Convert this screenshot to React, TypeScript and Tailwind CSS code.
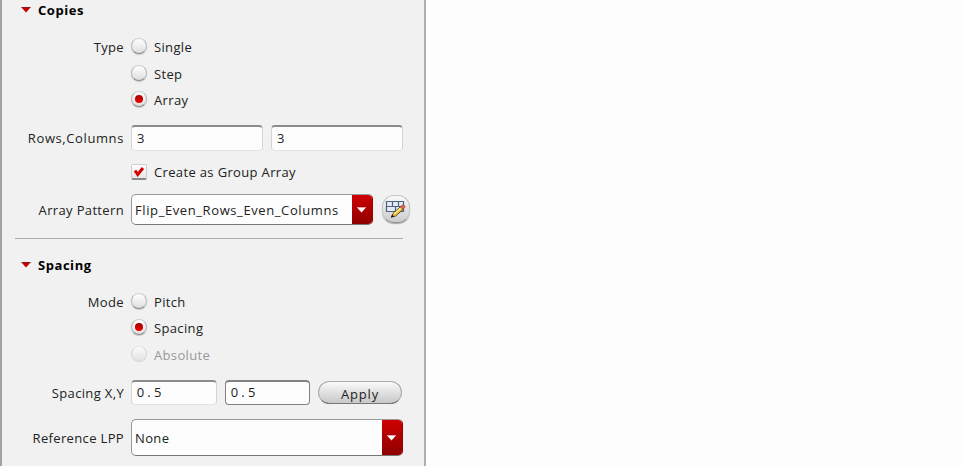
import type { ReactNode } from "react";

function Row({ label, className, children }: { label?: string; className: string; children: ReactNode }) {
  return (
    <div className={`flex items-center ${className}`}>
      <div className="w-[122px] shrink-0 whitespace-nowrap text-right">{label}</div>
      <div className="ml-[7px] flex items-center">{children}</div>
    </div>
  );
}

function Header({ title, className }: { title: string; className: string }) {
  return (
    <div className={`flex h-5 items-center pl-[19px] font-bold tracking-[0.55px] text-black ${className}`}>
      <svg width="10" height="6" viewBox="0 0 10 6" className="mr-[7px] -mt-px">
        <path d="M.5.5H9.5L5 5.5Z" fill="#c40000" />
        <path d="M.5.5H9.5" stroke="#8d1818" />
      </svg>
      {title}
    </div>
  );
}

function Radio({ label, checked, disabled }: { label: string; checked?: boolean; disabled?: boolean }) {
  return (
    <label className={`flex items-center ${disabled ? "text-[#999]" : ""}`}>
      <span
        className={`mr-[7px] -mt-[2px] flex size-4 items-center justify-center rounded-full border bg-linear-to-b from-white to-[#dedede] ${
          disabled ? "border-[#cfcfcf] border-t-[#e4e4e4] opacity-80" : "border-x-[#b8b8b8] border-t-[#cfcfcf] border-b-[#888] shadow-[0_1px_1px_#c8c8c8]"
        }`}
      >
        {checked && <span className="size-2 rounded-full bg-linear-to-b from-[#a90000] to-[#f00000]" />}
      </span>
      {label}
    </label>
  );
}

const inset = "border border-t-2 border-x-[#d4d4d4] border-b-[#e4e4e4] border-t-[#8c8c8c]";

function Field({ value, className }: { value: string; className: string }) {
  return <div className={`flex items-center rounded-[4px] bg-[#fdfdfd] pb-[2px] pl-[5px] ${className}`}>{value}</div>;
}

function NumberField({ value, className }: { value: string; className: string }) {
  return (
    <div className={`-mt-[2px] flex h-[25px] items-center rounded-[4px] bg-[#fdfdfd] pb-px pl-[4px] tracking-normal ${className}`}>
      {value.split("").map((c, i) => (
        <span key={i} className="w-[8.7px] text-center">{c}</span>
      ))}
    </div>
  );
}

function Select({ value, className }: { value: string; className: string }) {
  return (
    <div className={`flex overflow-hidden rounded-[5px] border border-[#999] border-b-[#777] border-r-[#900] bg-[#fdfdfd] ${className}`}>
      <div className="flex grow items-center pl-[3px] pt-px">{value}</div>
      <div className="flex w-5 items-center justify-center bg-linear-to-b from-[#d00000] to-[#8d0000]">
        <svg width="9" height="6" viewBox="0 0 9 6" className="-ml-px">
          <path d="M.5 1H8.5L4.5 5.5Z" fill="#fff" />
          <path d="M0 .5H9" stroke="#e8a0a0" />
        </svg>
      </div>
    </div>
  );
}

function PatternButton() {
  return (
    <button className="ml-[9px] -mt-[2px] flex h-7 w-7 items-center justify-center rounded-[12px] border border-[#c4c4c4] border-b-[#909090] bg-linear-to-b from-[#fafafa] to-[#ccc] shadow-[0_1px_1px_#aaa]">
      <svg width="22" height="22" viewBox="0 0 22 22" className="shrink-0">
        <rect x="1.5" y="3.5" width="17" height="10" fill="#e4ebf3" />
        <path d="M1.5 3.5H18.5V13.5H1.5ZM1.5 8.5H18.5M7.5 3.5V8.5M13.5 3.5V8.5M10.5 8.5V13.5" fill="none" stroke="#4c6482" strokeWidth="1.2" />
        <path d="M6.5 19L8 15.5L15.5 8.5L18.3 11.2L10.4 18.2Z" fill="#f8c030" stroke="#39302c" strokeWidth=".8" />
        <path d="M9.2 16L16 9.8" stroke="#fff09a" strokeWidth="1.2" />
        <path d="M15 9L17 7.2Q19.3 6.3 20.2 8.8L18 11.2Z" fill="#e06a58" stroke="#a34032" strokeWidth=".7" />
        <path d="M5.8 19.8L7.2 16.8L9.2 18.6Z" fill="#171717" />
      </svg>
    </button>
  );
}

export default function App() {
  return (
    <div className="h-[467px] w-full overflow-hidden bg-[#fdfdfd] font-['Open_Sans','Noto_Sans',sans-serif] text-[13px] leading-5 tracking-[0.35px] text-[#222]">
      <main className="h-[466px] w-[426px] border-x-2 border-l-[#a0a3a3] border-r-[#aeb0b0] bg-[#f0f1f0]">
        <Header title="Copies" className="" />
        <Row label="Type" className="mt-[14px] h-[26px]"><Radio label="Single" /></Row>
        <Row className="h-[27px]"><Radio label="Step" /></Row>
        <Row className="h-[26px]"><Radio label="Array" checked /></Row>
        <Row label="Rows,Columns" className="mt-[11px] h-7 tracking-[0.6px]">
          <Field value="3" className={`h-[26px] w-[132px] ${inset}`} />
          <Field value="3" className={`ml-2 h-[26px] w-[132px] ${inset}`} />
        </Row>
        <Row className="mt-[9px] h-[21px]">
          <span className="mr-[7px] mt-px flex size-4 items-center justify-center rounded-[2px] border border-[#ccc] border-b-2 border-b-[#888] bg-linear-to-b from-white to-[#e5e5e5]">
            <svg width="12" height="12" viewBox="0 0 12 12" className="shrink-0">
              <path d="M2 4.5L4.7 8.5L10 2" fill="none" stroke="#d10000" strokeWidth="3" />
            </svg>
          </span>
          Create as Group Array
        </Row>
        <Row label="Array Pattern" className="mt-[12px] h-[31px]">
          <Select value="Flip_Even_Rows_Even_Columns" className="h-[31px] w-[242px] tracking-[0.6px]" />
          <PatternButton />
        </Row>
        <hr className="ml-[13px] mt-[13px] w-[388px] border-t border-[#aaa]" />
        <Header title="Spacing" className="mt-[16px]" />
        <Row label="Mode" className="mt-[14px] h-[26px]"><Radio label="Pitch" /></Row>
        <Row className="h-[26px]"><Radio label="Spacing" checked /></Row>
        <Row className="h-[27px]"><Radio label="Absolute" disabled /></Row>
        <Row label="Spacing X,Y" className="mt-[12px] h-[26px]">
          <NumberField value="0.5" className={`w-[86px] ${inset}`} />
          <NumberField value="0.5" className="ml-2 w-[85px] border border-t-2 border-[#828282]" />
          <button className="ml-[8px] -mt-px flex h-[23px] w-[84px] items-center justify-center rounded-full border border-[#aaa] border-b-[#777] bg-linear-to-b from-[#fafafa] to-[#c8c8c8] pt-[2px] tracking-[0.8px]">Apply</button>
        </Row>
        <Row label="Reference LPP" className="mt-[13px] h-[37px]">
          <Select value="None" className="h-[37px] w-[272px]" />
        </Row>
      </main>
    </div>
  );
}
